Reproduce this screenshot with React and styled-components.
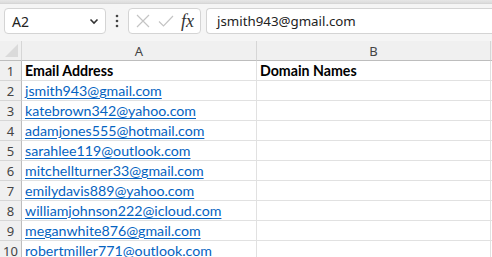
import React from "react";
import styled, { createGlobalStyle } from "styled-components";

const Global = createGlobalStyle`
  html, body { margin: 0; padding: 0; background: #ffffff; }
  body { overflow: hidden; }
`;

const Page = styled.div`
  width: 492px;
  height: 257px;
  overflow: hidden;
  background: #ffffff;
`;

const TopStrip = styled.div`
  height: 3px;
  background: linear-gradient(#e6e6e6, #dcdcdc);
  border-bottom: 1px solid #d6d6d6;
`;

const Toolbar = styled.div`
  height: 37px;
  box-sizing: border-box;
  background: #f5f5f5;
  display: flex;
  align-items: flex-start;
  padding: 4px 0 0 4px;
`;

const NameBox = styled.div`
  box-sizing: border-box;
  width: 102px;
  height: 26px;
  background: #fff;
  border: 1px solid #d4d4d4;
  border-radius: 4px;
  display: flex;
  align-items: center;
  justify-content: space-between;
  padding: 0 6px 0 7px;
  font-family: "Noto Sans", "Open Sans", sans-serif;
  font-size: 14px;
  color: #222;
`;

const Dots = styled.div`
  width: 22px;
  height: 26px;
  display: flex;
  align-items: center;
  justify-content: center;
`;

const FxGroup = styled.div`
  box-sizing: border-box;
  width: 73px;
  height: 26px;
  background: #fff;
  border: 1px solid #d4d4d4;
  border-radius: 4px;
  display: flex;
  align-items: center;
  padding-left: 4px;
  gap: 4px;
`;

const FxBtn = styled.div`
  width: 19px;
  height: 24px;
  display: flex;
  align-items: center;
  justify-content: center;
`;

const FxText = styled.span`
  font-family: "Liberation Serif", "DejaVu Serif", serif;
  font-style: italic;
  font-size: 18px;
  color: #333;
  letter-spacing: 0px;
  margin-left: 2px;
  line-height: 1;
`;

const FormulaInput = styled.div`
  box-sizing: border-box;
  flex: 1;
  margin-left: 5px;
  height: 26px;
  background: #fff;
  border: 1px solid #d4d4d4;
  border-right: none;
  border-radius: 4px 0 0 4px;
  display: flex;
  align-items: center;
  padding-left: 10px;
  font-family: "Noto Sans", "Open Sans", sans-serif;
  font-size: 13.3px;
  color: #222;
`;

const Grid = styled.div`
  display: grid;
  grid-template-columns: 22px 235px 234px 20px;
  grid-auto-rows: 20px;
`;

const Corner = styled.div`
  box-sizing: border-box;
  background: #f0f0f0;
  border-right: 1px solid #d6d6d6;
  border-bottom: 1px solid #bdbdbd;
  position: relative;
`;

const CornerTri = styled.div`
  position: absolute;
  right: 3px;
  bottom: 3px;
  width: 0;
  height: 0;
  border-left: 13px solid transparent;
  border-bottom: 13px solid #dadada;
`;

const ColHead = styled.div`
  box-sizing: border-box;
  background: #f0f0f0;
  border-right: 1px solid #d6d6d6;
  border-bottom: 1px solid #bdbdbd;
  display: flex;
  align-items: center;
  justify-content: center;
  font-family: "Noto Sans", "Open Sans", sans-serif;
  font-size: 13px;
  color: #444;
  padding-top: 1px;
`;

const RowHead = styled.div`
  box-sizing: border-box;
  background: #f0f0f0;
  border-right: 1px solid #bdbdbd;
  border-bottom: 1px solid #d6d6d6;
  display: flex;
  align-items: center;
  justify-content: center;
  font-family: "Noto Sans", "Open Sans", sans-serif;
  font-size: 13px;
  color: #444;
`;

const Cell = styled.div`
  box-sizing: border-box;
  border-right: 1px solid #e1e1e1;
  border-bottom: 1px solid #e1e1e1;
  display: flex;
  align-items: center;
  padding-left: 3px;
  font-family: "Lato", "Liberation Sans", sans-serif;
  font-size: 14.2px;
  white-space: nowrap;
  overflow: visible;
  color: ${(p) => (p.$link ? "#0563c1" : "#000")};
  font-weight: ${(p) => (p.$bold ? 700 : 400)};
  text-decoration: ${(p) => (p.$link ? "underline" : "none")};
  text-underline-offset: 2px;
`;

const emails = [
  "jsmith943@gmail.com",
  "katebrown342@yahoo.com",
  "adamjones555@hotmail.com",
  "sarahlee119@outlook.com",
  "mitchellturner33@gmail.com",
  "emilydavis889@yahoo.com",
  "williamjohnson222@icloud.com",
  "meganwhite876@gmail.com",
  "robertmiller771@outlook.com",
];

export default function App() {
  return (
    <Page>
      <Global />
      <TopStrip />
      <Toolbar>
        <NameBox>
          <span>A2</span>
          <svg width="10" height="10" viewBox="0 0 10 10">
            <path d="M1.5 3.5 L5 7 L8.5 3.5" fill="none" stroke="#333" strokeWidth="1.6" />
          </svg>
        </NameBox>
        <Dots>
          <svg width="4" height="14" viewBox="0 0 4 14">
            <circle cx="2" cy="2" r="1.3" fill="#444" />
            <circle cx="2" cy="7" r="1.3" fill="#444" />
            <circle cx="2" cy="12" r="1.3" fill="#444" />
          </svg>
        </Dots>
        <FxGroup>
          <FxBtn>
            <svg width="14" height="14" viewBox="0 0 14 14">
              <path d="M1 1 L13 13 M13 1 L1 13" stroke="#c4c4c4" strokeWidth="1.2" fill="none" />
            </svg>
          </FxBtn>
          <FxBtn>
            <svg width="16" height="14" viewBox="0 0 16 14">
              <path d="M1 7.5 L5.5 12 L15 2" stroke="#c4c4c4" strokeWidth="1.2" fill="none" />
            </svg>
          </FxBtn>
          <FxText>fx</FxText>
        </FxGroup>
        <FormulaInput>jsmith943@gmail.com</FormulaInput>
      </Toolbar>
      <Grid>
        <Corner>
          <CornerTri />
        </Corner>
        <ColHead>A</ColHead>
        <ColHead>B</ColHead>
        <ColHead />
        <RowHead>1</RowHead>
        <Cell $bold>Email Address</Cell>
        <Cell $bold>Domain Names</Cell>
        <Cell />
        {emails.map((e, i) => (
          <React.Fragment key={e}>
            <RowHead>{i + 2}</RowHead>
            <Cell $link>{e}</Cell>
            <Cell />
            <Cell />
          </React.Fragment>
        ))}
      </Grid>
    </Page>
  );
}
